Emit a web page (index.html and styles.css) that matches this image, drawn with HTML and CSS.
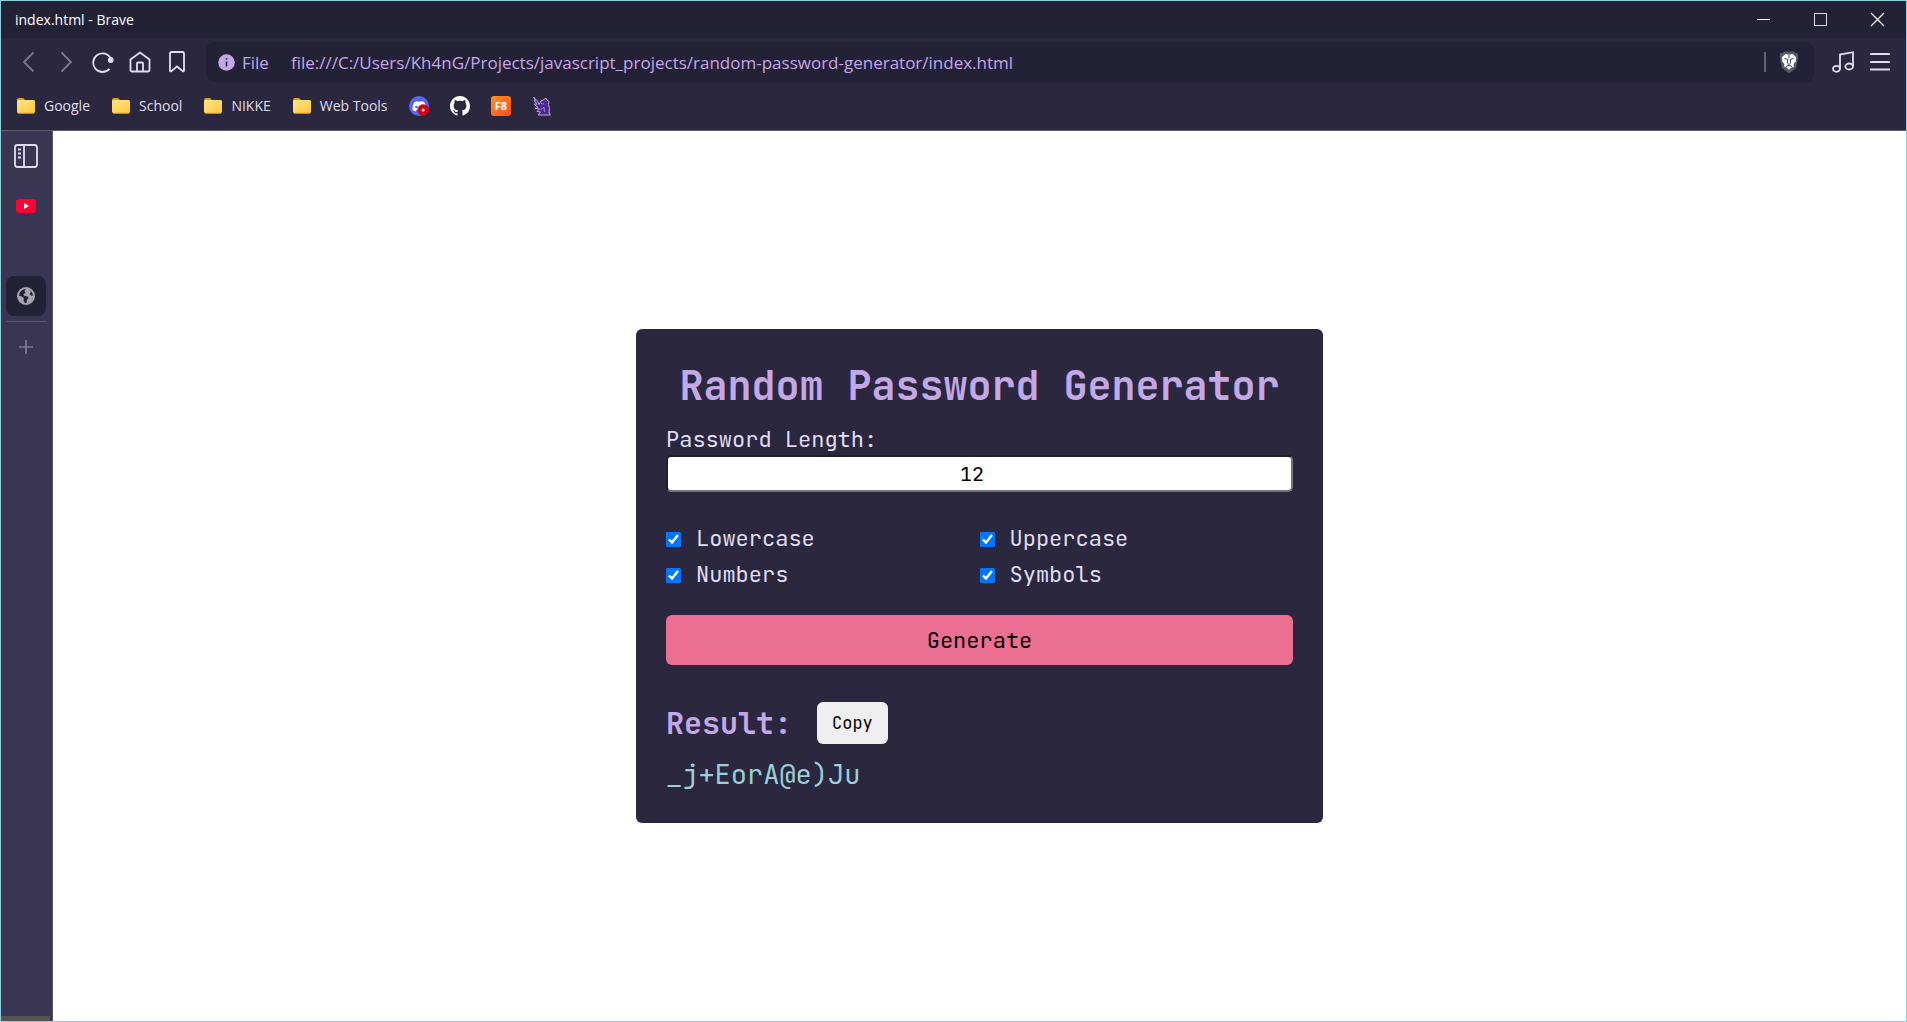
FILE: index.html
```html
<!DOCTYPE html>
<html lang="en">
<head>
<meta charset="utf-8">
<title>index.html - Brave</title>
<link rel="stylesheet" href="styles.css">
</head>
<body>
<div class="window">
  <header class="chrome">
    <div class="titlebar">
      <span class="window-title">index.html - Brave</span>
      <div class="window-controls">
        <button class="window-button" aria-label="Minimize"><svg width="15" height="15" viewBox="0 0 15 15" stroke="#fff"><path d="M1 7.500h13"/></svg></button>
        <button class="window-button" aria-label="Maximize"><svg width="15" height="15" viewBox="0 0 15 15" fill="none" stroke="#d8d8e0"><rect x="1.500" y="1.500" width="12" height="12"/></svg></button>
        <button class="window-button" aria-label="Close"><svg width="15" height="15" viewBox="0 0 15 15" stroke="#fff" stroke-width="1.200"><path d="M1 1l13 13M14 1L1 14"/></svg></button>
      </div>
    </div>
    <nav class="toolbar">
      <div class="nav-buttons">
        <button class="icon-button dim" aria-label="Back"><svg width="22" height="22" viewBox="0 0 22 22"><path d="M15.500 1.500L6 11l9.500 9.500"/></svg></button>
        <button class="icon-button dim" aria-label="Forward"><svg width="22" height="22" viewBox="0 0 22 22"><path d="M6.500 1.500L16 11l-9.500 9.500"/></svg></button>
        <button class="icon-button" aria-label="Reload"><svg width="22" height="22" viewBox="0 0 22 22"><path d="M17.500 17.800A9.300 9.300 0 1 1 18.800 7.500"/><circle cx="18.700" cy="9" r="2" fill="currentColor"/></svg></button>
        <button class="icon-button" aria-label="Home"><svg width="22" height="22" viewBox="0 0 22 22"><path d="M1.500 8.500L11 1.500l9.500 7v10.500a1.500 1.500 0 0 1-1.500 1.500H3A1.500 1.500 0 0 1 1.500 19zM8 20.500v-8a1 1 0 0 1 1-1h4a1 1 0 0 1 1 1v8"/></svg></button>
        <button class="icon-button" aria-label="Bookmark"><svg width="22" height="22" viewBox="0 0 22 22"><path d="M4 2.500a1.500 1.500 0 0 1 1.500-1.500h11A1.500 1.500 0 0 1 18 2.500V20l-1 .5-6-5-6 5L4 20z"/></svg></button>
      </div>
      <div class="address">
        <svg class="info" width="17" height="17" viewBox="0 0 17 17"><circle cx="8.500" cy="8.500" r="8.300" fill="#c4a7e7"/><path d="M8.500 7.500v5M8.500 4.200v1.600" stroke="#232136" stroke-width="1.600"/></svg>
        <span class="scheme">File</span>
        <input class="url" type="text" aria-label="Address" value="file:///C:/Users/Kh4nG/Projects/javascript_projects/random-password-generator/index.html">
        <span class="separator"></span>
        <button class="shield" aria-label="Brave Shields"><svg width="20" height="24" viewBox="0 0 20 24"><path d="M5 1.500h10l1.500 1.800 2-.3.800 3.500-.6 4-1.700 7.500L10 23.500 3 18 1.300 10.500.7 6.500 1.500 3l2 .3z" fill="#5a5869"/><path d="M6.500 4L10 4.800 13.500 4l3.700 3.300-.5 2.200.3 1.500-2.500 3.200.5 2.300-3 1.200-2 2-2-2-3-1.200.5-2.300L3 11l.3-1.500-.5-2.200z" fill="#fff"/><path d="M5.500 8.500l3.300 1-.5 3.500L10 14.500l1.700-1.500-.5-3.500 3.300-1M7 16.500l3-1.300 3 1.300M10 5v3.500" fill="none" stroke="#444252"/></svg></button>
      </div>
      <div class="tools">
        <button class="icon-button" aria-label="Media"><svg width="22" height="22" viewBox="0 0 22 22"><path d="M8 17.500V3.500L21 1.200V15"/><ellipse cx="4.500" cy="17.800" rx="3.500" ry="3"/><ellipse cx="17.200" cy="15.500" rx="3.800" ry="3"/></svg></button>
        <button class="icon-button" aria-label="Menu"><svg width="22" height="22" viewBox="0 0 22 22"><path d="M1 3h20M1 11h20M1 18.500h20"/></svg></button>
      </div>
    </nav>
    <svg class="defs" width="0" height="0"><defs>
      <linearGradient id="gold" x2="1" y2="1"><stop stop-color="#ffe58c"/><stop offset="1" stop-color="#ffc933"/></linearGradient>
      <linearGradient id="orange" x2="1" y2="1"><stop stop-color="#ff9326"/><stop offset="1" stop-color="#ff4a1c"/></linearGradient>
      <symbol id="folder" viewBox="0 0 20 18"><path d="M1 3a2 2 0 0 1 2-2h4l2 2h8.500A1.500 1.500 0 0 1 19 4.500v5H1z" fill="#dfa010"/><rect x="1" y="3" width="18" height="13" rx="1.500" fill="url(#gold)"/><path d="M2 16.300h16" stroke="#dba32b"/></symbol>
    </defs></svg>
    <nav class="bookmarks">
      <a class="bookmark" href="#"><svg width="20" height="18"><use href="#folder"/></svg>Google</a>
      <a class="bookmark" href="#"><svg width="20" height="18"><use href="#folder"/></svg>School</a>
      <a class="bookmark" href="#"><svg width="20" height="18"><use href="#folder"/></svg>NIKKE</a>
      <a class="bookmark" href="#"><svg width="20" height="18"><use href="#folder"/></svg>Web Tools</a>
      <a class="bookmark" href="#" aria-label="Discord"><svg width="20" height="20" viewBox="0 0 20 20"><circle cx="10" cy="10" r="10" fill="#5865f2"/><path d="M5 6.500Q7 5 8.500 5l.5.800h2.500L12 5q2 .2 3.500 1.500Q17.500 10 17 14l-3 1.500-1-1.500H7.500L6.500 15.500 3.500 14Q3.200 10 5 6.500z" fill="#fff"/><circle cx="7.500" cy="11" r="1.300" fill="#5865f2"/><circle cx="14.200" cy="14" r="5.800" fill="#d5000b"/><circle cx="14.200" cy="14" r="1.500" fill="#fff"/></svg></a>
      <a class="bookmark" href="#" aria-label="GitHub"><svg width="20" height="20" viewBox="0 0 16 16"><path fill="#fff" d="M8 0C3.580 0 0 3.580 0 8c0 3.540 2.290 6.530 5.470 7.590.4.070.55-.17.55-.38 0-.19-.01-.82-.01-1.490-2.010.37-2.530-.49-2.690-.94-.09-.23-.48-.94-.82-1.130-.28-.15-.68-.52-.01-.53.630-.01 1.080.58 1.230.82.720 1.210 1.870.87 2.330.66.070-.52.280-.87.510-1.070-1.780-.2-3.640-.89-3.640-3.950 0-.87.310-1.590.82-2.150-.08-.2-.36-1.020.08-2.120 0 0 .67-.21 2.200.82.640-.18 1.320-.27 2-.27s1.360.09 2 .27c1.530-1.040 2.200-.82 2.200-.82.440 1.100.16 1.920.08 2.120.51.560.82 1.270.82 2.150 0 3.070-1.870 3.750-3.650 3.950.290.250.54.730.54 1.480 0 1.070-.01 1.930-.01 2.200 0 .21.150.46.55.38A8.010 8.010 0 0 0 16 8c0-4.420-3.580-8-8-8z"/></svg></a>
      <a class="bookmark" href="#" aria-label="F8"><svg width="20" height="20" viewBox="0 0 20 20"><rect width="20" height="20" rx="3" fill="url(#orange)"/><text class="badge-text" x="10" y="14" text-anchor="middle">F8</text></svg></a>
      <a class="bookmark" href="#" aria-label="Gryphon"><svg width="20" height="20" viewBox="0 0 20 20"><path d="M1.500 1l4 4 1.500 3.500L9 5l3-1.500 2-1.500 1 2 2 1.500-.5 3 1 4-.5 4.500 1.500 2H6l2.500-3-3.500-.5 2.500-2.500L3 12.500l3-1-4-3.500 3 .2L2 4.500l1.500.2z" fill="#4a2a8c" stroke="#b9a6e8"/><path d="M9 7.500l3 .5M8.500 13.500l3.500-2 .5 4.500" fill="none" stroke="#9b83d5"/></svg></a>
    </nav>
  </header>
  <aside class="sidebar">
    <button class="side-button panel" aria-label="Toggle tabs panel"><svg width="26" height="26" viewBox="0 0 26 26" fill="none" stroke="#e0def4" stroke-width="1.800"><rect x="2" y="2" width="22" height="22" rx="2.500"/><path d="M11 2v22"/><path d="M5 6.500h3M5 10.500h3M5 14.500h3"/></svg></button>
    <button class="side-button" aria-label="YouTube"><svg width="20" height="14" viewBox="0 0 20 14"><rect width="20" height="14" rx="3" fill="#ff0033"/><path d="M8 4l5 3-5 3z" fill="#fff"/></svg></button>
    <button class="side-button active" aria-label="index.html"><svg width="18" height="18" viewBox="0 0 18 18"><circle cx="9" cy="9" r="8" fill="#232136" stroke="#a5a6ad" stroke-width="2"/><path d="M9 1.500L7.500 4l1 1.800-2 1.500.5 1.500 3.500.4 1 2.300-1.500 1-.5 4L15 14l1.500-5-2-.2L12.500 7l1.500-2-2-3zM1.500 9l3 .3 2.300 1.700-.3 2.500 1.500 3H5.500L2 12.500z" fill="#a5a6ad"/></svg></button>
    <hr class="divider">
    <button class="side-button new-tab" aria-label="New tab"><svg width="14" height="14" viewBox="0 0 14 14" stroke="#9a95ad" stroke-width="1.200"><path d="M7 0v14M0 7h14"/></svg></button>
    <div class="status"></div>
  </aside>
  <main class="page">
    <form class="card">
      <h1 class="title">Random Password Generator</h1>
      <label class="label" for="length">Password Length:</label>
      <input class="length" id="length" type="number" value="12">
      <div class="options">
        <label class="option"><input type="checkbox" checked>Lowercase</label>
        <label class="option"><input type="checkbox" checked>Uppercase</label>
        <label class="option"><input type="checkbox" checked>Numbers</label>
        <label class="option"><input type="checkbox" checked>Symbols</label>
      </div>
      <button class="generate" type="button">Generate</button>
      <div class="result-head">
        <h2 class="result-title">Result:</h2>
        <button class="copy" type="button">Copy</button>
      </div>
      <output class="password" for="length">_j+EorA@e)Ju</output>
    </form>
  </main>
</div>
</body>
</html>
```

FILE: styles.css
```css
* { box-sizing: border-box; }

body {
  margin: 0;
  font-family: "Open Sans", "Noto Sans", sans-serif;
  font-size: 14px;
  color: #e0def4;
}

button {
  border: 0;
  padding: 0;
  background: none;
  color: inherit;
  font-family: inherit;
}

svg { display: block; flex: none; }

.defs { position: absolute; }

.window {
  display: grid;
  grid-template: auto 1fr / 52px 1fr;
  min-height: 100vh;
  border: 1px solid #8fcfdb;
}

/* Browser frame */
.chrome {
  grid-column: 1 / -1;
  background: #2a273f;
  border-bottom: 1px solid #5c596b;
}

.titlebar {
  display: flex;
  justify-content: space-between;
  align-items: center;
  height: 37px;
  padding-left: 14px;
  background: #232136;
  color: #fff;
}

.window-controls { display: flex; }

.window-button {
  display: grid;
  place-items: center;
  width: 57px;
  height: 37px;
}

.toolbar {
  display: flex;
  align-items: center;
  padding: 4px 15px 0 17px;
}

.nav-buttons { display: flex; gap: 15px; }

.icon-button svg {
  fill: none;
  stroke: currentColor;
  stroke-width: 1.8;
}

.dim { color: #7c798f; }

.address {
  display: flex;
  flex: 1;
  align-items: center;
  height: 40px;
  margin: 0 18px;
  padding: 0 15px 0 12px;
  border-radius: 8px;
  background: #232136;
  color: #c4a7e7;
  font-size: 17px;
}

.scheme { margin: 0 22px 0 7px; }

.url {
  flex: 1;
  min-width: 0;
  padding: 0;
  border: 0;
  background: none;
  color: inherit;
  font: inherit;
}

.separator {
  width: 2px;
  height: 20px;
  margin-right: 13px;
  background: #666375;
}

.tools { display: flex; gap: 15px; }

.bookmarks {
  display: flex;
  align-items: center;
  gap: 21px;
  height: 48px;
  padding: 0 0 1px 15px;
}

.bookmark {
  display: flex;
  align-items: center;
  gap: 8px;
  color: inherit;
  text-decoration: none;
}

.badge-text {
  fill: #fff;
  font-size: 11px;
  font-weight: 700;
}

/* Vertical tabs */
.sidebar {
  display: flex;
  flex-direction: column;
  align-items: center;
  padding-top: 5px;
  padding-right: 2px;
  border-right: 1px solid #5c596b;
  background: #393552;
}

.side-button {
  display: grid;
  place-items: center;
  width: 40px;
  height: 40px;
}

.panel { margin-bottom: 10px; }

.active {
  margin-top: 50px;
  border-radius: 8px;
  background: #232136;
}

.divider {
  width: 40px;
  margin: 5px 0;
  border: 0;
  border-top: 1px solid #5c596b;
}

.status {
  align-self: stretch;
  height: 5px;
  margin-top: auto;
  background: #555;
}

/* Page */
.page {
  display: grid;
  place-items: center;
  background: #fff;
}

.card {
  display: flex;
  flex-direction: column;
  width: 687px;
  padding: 30px;
  border-radius: 6px;
  background: #2a273f;
  font-family: "JetBrains Mono", "DejaVu Sans Mono", monospace;
  font-size: 22px;
}

.title {
  margin: 0 0 12px;
  color: #c4a7e7;
  font-size: 40px;
  line-height: 54px;
  text-align: center;
  white-space: nowrap;
}

.label { line-height: 30px; }

.length {
  height: 37px;
  border: 2px inset #767676;
  border-radius: 5px;
  background: #fff;
  color: #000;
  font: 20px "JetBrains Mono", "DejaVu Sans Mono", monospace;
  text-align: center;
}

.options {
  display: grid;
  grid-template-columns: 1fr 1fr;
  gap: 6px 0;
  margin: 32px 0 25px;
}

.option {
  display: flex;
  align-items: center;
  gap: 15px;
  line-height: 30px;
}

.option input {
  width: 15px;
  height: 15px;
  margin: 0;
  accent-color: #0075ff;
}

.generate {
  height: 50px;
  border-radius: 6px;
  background: #eb6f92;
  color: #000;
  font-size: 22px;
}

.result-head {
  display: flex;
  align-items: center;
  gap: 25px;
  margin: 37px 0 11px;
}

.result-title {
  margin: 0;
  color: #c4a7e7;
  font-size: 30px;
  line-height: 40px;
}

.copy {
  height: 42px;
  padding: 0 15px;
  border-radius: 6px;
  background: #efefef;
  color: #000;
  font-size: 17px;
}

.password {
  color: #9ccfd8;
  font-size: 27px;
  line-height: 38px;
}
```
